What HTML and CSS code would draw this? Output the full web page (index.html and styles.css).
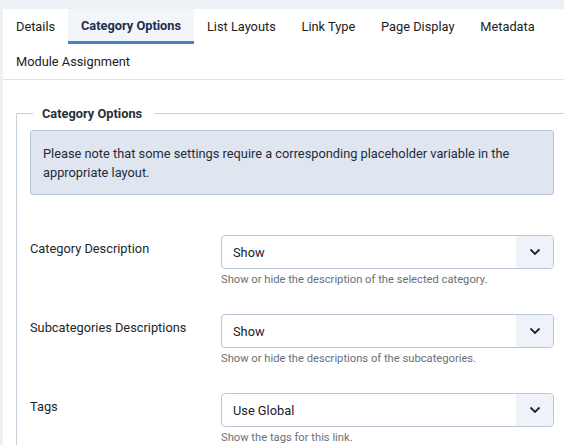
FILE: index.html
```html
<!DOCTYPE html>
<html>
<head>
<meta charset="utf-8">
<link rel="stylesheet" href="styles.css">
</head>
<body>
<div class="card">
  <ul class="tabs">
    <li class="tab">Details</li>
    <li class="tab active">Category Options</li>
    <li class="tab">List Layouts</li>
    <li class="tab">Link Type</li>
    <li class="tab">Page Display</li>
    <li class="tab">Metadata</li>
    <li class="tab">Module Assignment</li>
  </ul>
  <div class="panel">
    <fieldset class="options">
      <legend class="legend">Category Options</legend>
      <div class="alert">Please note that some settings require a corresponding placeholder variable in the appropriate layout.</div>
      <div class="field">
        <label class="label">Category Description</label>
        <div class="control">
          <div class="select"><span class="value">Show</span><span class="arrow"><svg width="12" height="8" viewBox="0 0 12 8"><path d="M1.5 1.5 L6 6 L10.5 1.5" fill="none" stroke="#1f2530" stroke-width="1.8"/></svg></span></div>
          <div class="help">Show or hide the description of the selected category.</div>
        </div>
      </div>
      <div class="field">
        <label class="label">Subcategories Descriptions</label>
        <div class="control">
          <div class="select"><span class="value">Show</span><span class="arrow"><svg width="12" height="8" viewBox="0 0 12 8"><path d="M1.5 1.5 L6 6 L10.5 1.5" fill="none" stroke="#1f2530" stroke-width="1.8"/></svg></span></div>
          <div class="help">Show or hide the descriptions of the subcategories.</div>
        </div>
      </div>
      <div class="field">
        <label class="label">Tags</label>
        <div class="control">
          <div class="select"><span class="value">Use Global</span><span class="arrow"><svg width="12" height="8" viewBox="0 0 12 8"><path d="M1.5 1.5 L6 6 L10.5 1.5" fill="none" stroke="#1f2530" stroke-width="1.8"/></svg></span></div>
          <div class="help">Show the tags for this link.</div>
        </div>
      </div>
    </fieldset>
  </div>
</div>
</body>
</html>
```
FILE: styles.css
```css
html, body {
  margin: 0;
  padding: 0;
  overflow: hidden;
}
body {
  background: #edf1f6;
  font-family: Roboto, "Liberation Sans", sans-serif;
  color: #22262a;
  font-size: 12.8px;
}
.card {
  margin: 9px 0 0 3px;
  background: #fff;
  overflow: hidden;
  height: 440px;
}
.tabs {
  list-style: none;
  margin: 0;
  padding: 0;
  display: flex;
  flex-wrap: wrap;
  border-bottom: 1px solid #dde3ea;
}
.tab {
  height: 35px;
  line-height: 35px;
  padding: 0 12.8px 0 13px;
  box-sizing: border-box;
  color: #1b1d20;
  white-space: nowrap;
}
.tab.active {
  background: #f2f5fa;
  font-weight: 700;
  color: #1f2d4e;
  border-bottom: 3px solid #4b80c4;
  line-height: 34px;
}
.panel {
  padding: 26px 0 0 13px;
}
.options {
  margin: 0 -4px 0 0;
  border: 1px solid #c8d0dc;
  border-bottom: none;
  padding: 9px 13px 0 13px;
  min-width: 0;
}
.legend {
  font-weight: 700;
  font-size: 12.8px;
  color: #2a2f36;
  padding: 0 12px 0 9px;
  margin-left: 3px;
}
.alert {
  background: #dfe6f0;
  border: 1px solid #b8c5d8;
  border-radius: 3px;
  padding: 13px 12px 12px 12px;
  line-height: 19px;
  color: #1f2b3d;
  font-size: 12.8px;
  margin-bottom: 40px;
}
.field {
  display: grid;
  grid-template-columns: 191px 1fr;
  margin-bottom: 26px;
}
.label {
  padding-top: 6px;
  font-size: 12.8px;
  color: #22262a;
}
.select {
  height: 34px;
  box-sizing: border-box;
  border: 1px solid #b9c4d6;
  border-radius: 4px;
  display: flex;
  align-items: center;
  overflow: hidden;
}
.value {
  flex: 1;
  padding-left: 11px;
  font-size: 12.8px;
  color: #1d2126;
}
.arrow {
  width: 37px;
  height: 100%;
  background: #eff3f9;
  display: flex;
  align-items: center;
  justify-content: center;
}
.arrow svg {
  display: block;
}
.help {
  margin-top: 3px;
  font-size: 11.2px;
  line-height: 16px;
  color: #6b7077;
}
```
